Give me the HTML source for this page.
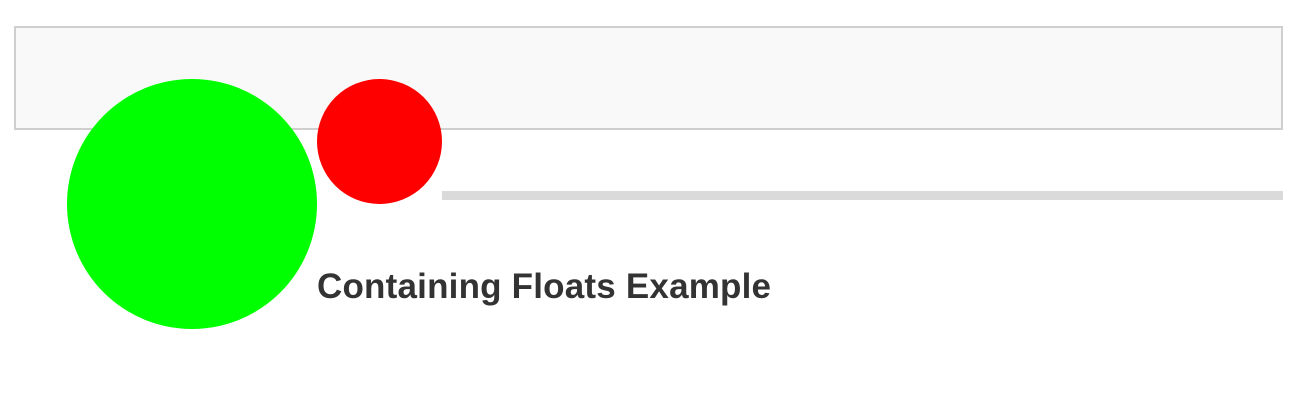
<!DOCTYPE html>
<html><head><meta charset="utf-8"><style>
html,body{margin:0;padding:0;background:#fff;width:1308px;height:416px;overflow:hidden;position:relative}
.box{position:absolute;left:14px;top:26px;width:1265px;height:100px;background:#f9f9f9;border:2px solid #cfcfcf}
.g{position:absolute;left:67px;top:79px;width:250px;height:250px;border-radius:50%;background:#00ff00}
.r{position:absolute;left:317px;top:79px;width:125px;height:125px;border-radius:50%;background:#ff0000}
.bar{position:absolute;left:442px;top:191px;width:841px;height:9px;background:#dadada}
h1{position:absolute;left:317px;top:266px;margin:0;font:bold 35px/42px "Liberation Sans",sans-serif;color:#333;letter-spacing:0.2px;white-space:nowrap}
</style></head><body>
<div class="box"></div>
<div class="g"></div>
<div class="r"></div>
<div class="bar"></div>
<h1>Containing Floats Example</h1>
</body></html>
